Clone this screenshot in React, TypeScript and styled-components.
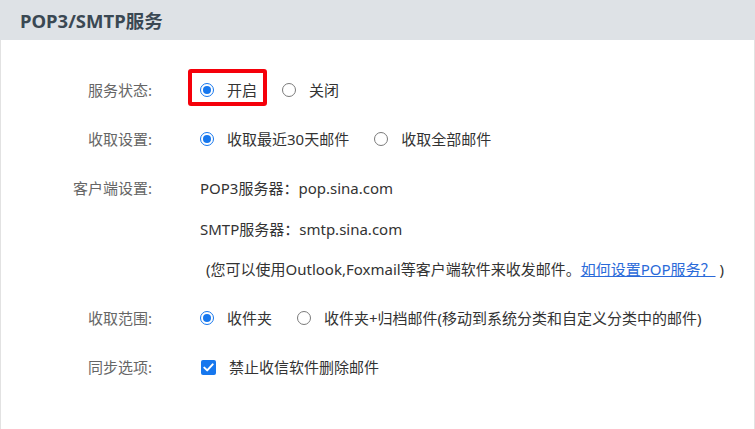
import styled, { createGlobalStyle, css } from 'styled-components';

const GlobalStyle = createGlobalStyle`
  html, body {
    margin: 0;
    padding: 0;
    background: #ffffff;
  }
  body {
    font-family: "Noto Sans", "Noto Sans CJK SC", sans-serif;
    font-size: 15px;
    color: #333333;
  }
`;

const Panel = styled.div`
  min-height: 100vh;
  box-sizing: border-box;
  border-left: 1px solid #e2e2e2;
  border-right: 1px solid #e2e2e2;
`;

const Header = styled.div`
  height: 40px;
  background: #dee2e6;
  display: flex;
  align-items: center;
  padding-left: 20px;
  margin-left: -1px;
  margin-right: -1px;
  font-size: 18.5px;
  font-weight: 700;
  color: #3a4853;
`;

const Body = styled.div`
  padding-top: 40px;
  display: flex;
  flex-direction: column;
  gap: 29px;
`;

const Row = styled.div`
  display: grid;
  grid-template-columns: 151px 1fr;
  column-gap: 48px;
  align-items: start;
`;

const Label = styled.div`
  text-align: right;
  line-height: 20px;
  color: #666666;
`;

const Lines = styled.div`
  display: flex;
  flex-direction: column;
  gap: 20.5px;
`;

const Line = styled.div<{ $indent?: number }>`
  line-height: 20px;
  height: 20px;
  display: flex;
  align-items: center;
  padding-left: ${({ $indent }) => $indent ?? 0}px;
  color: #333333;
  white-space: nowrap;
`;

const Options = styled.div`
  display: flex;
  align-items: center;
  height: 20px;
`;

const Option = styled.label<{ $highlight?: boolean }>`
  position: relative;
  display: flex;
  align-items: center;
  gap: 13px;
  margin-right: 25px;
  line-height: 20px;
  color: #333333;
  white-space: nowrap;
  ${({ $highlight }) =>
    $highlight &&
    css`
      &::after {
        content: '';
        position: absolute;
        top: -11px;
        bottom: -6px;
        left: -12px;
        right: -10px;
        border: 4px solid #f5000a;
        border-radius: 3px;
      }
    `}
`;

const Radio = styled.span<{ $checked?: boolean }>`
  width: 14px;
  height: 14px;
  box-sizing: border-box;
  border-radius: 50%;
  border: 1px solid ${({ $checked }) => ($checked ? '#1677ee' : '#7a7a7a')};
  display: flex;
  align-items: center;
  justify-content: center;
  flex-shrink: 0;
  &::before {
    content: '';
    width: 8px;
    height: 8px;
    border-radius: 50%;
    background: ${({ $checked }) => ($checked ? '#1677ee' : 'transparent')};
  }
`;

const Check = styled.span`
  width: 15px;
  height: 15px;
  border-radius: 2px;
  background: #1677ee;
  display: flex;
  align-items: center;
  justify-content: center;
  flex-shrink: 0;
  margin-left: 1px;
`;

const Link = styled.a`
  color: #2a6ad9;
  text-decoration: underline;
  cursor: pointer;
`;

const RadioOption = ({
  label,
  checked,
  highlight,
}: {
  label: string;
  checked?: boolean;
  highlight?: boolean;
}) => (
  <Option $highlight={highlight}>
    <Radio $checked={checked} />
    {label}
  </Option>
);

const App = () => {
  return (
    <>
      <GlobalStyle />
      <Panel>
        <Header>POP3/SMTP服务</Header>
        <Body>
          <Row>
            <Label>服务状态:</Label>
            <Options>
              <RadioOption label="开启" checked highlight />
              <RadioOption label="关闭" />
            </Options>
          </Row>
          <Row>
            <Label>收取设置:</Label>
            <Options>
              <RadioOption label="收取最近30天邮件" checked />
              <RadioOption label="收取全部邮件" />
            </Options>
          </Row>
          <Row>
            <Label>客户端设置:</Label>
            <Lines>
              <Line>POP3服务器：pop.sina.com</Line>
              <Line>SMTP服务器：smtp.sina.com</Line>
              <Line $indent={6}>
                (您可以使用Outlook,Foxmail等客户端软件来收发邮件。
                <Link>如何设置POP服务？</Link>&nbsp;)
              </Line>
            </Lines>
          </Row>
          <Row>
            <Label>收取范围:</Label>
            <Options>
              <RadioOption label="收件夹" checked />
              <RadioOption label="收件夹+归档邮件(移动到系统分类和自定义分类中的邮件)" />
            </Options>
          </Row>
          <Row>
            <Label>同步选项:</Label>
            <Options>
              <Option>
                <Check>
                  <svg width="11" height="9" viewBox="0 0 11 9" fill="none">
                    <path
                      d="M1.3 4.6 L4.2 7.4 L9.7 1.4"
                      stroke="#ffffff"
                      strokeWidth="2"
                      strokeLinecap="round"
                      strokeLinejoin="round"
                    />
                  </svg>
                </Check>
                禁止收信软件删除邮件
              </Option>
            </Options>
          </Row>
        </Body>
      </Panel>
    </>
  );
};

export default App;
